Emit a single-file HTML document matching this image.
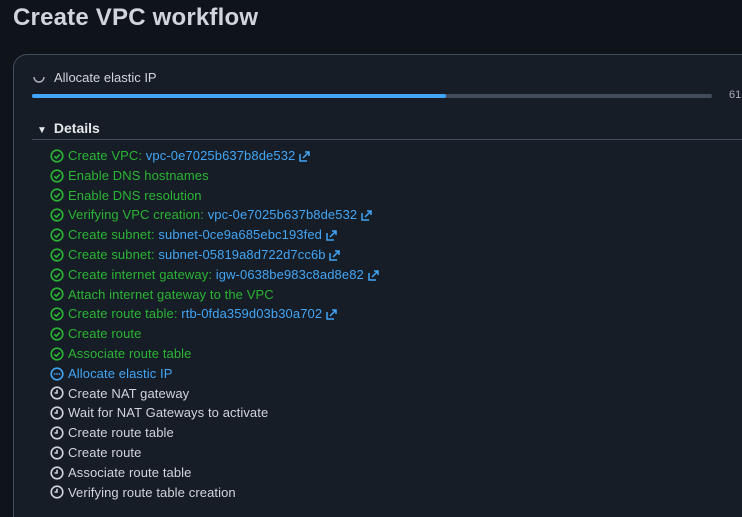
<!DOCTYPE html>
<html style="width:742px;height:517px;overflow:hidden"><head><style>
body{margin:0;width:742px;height:517px;background:#0f141a;font-family:"Liberation Sans",sans-serif;overflow:hidden;position:relative;color:#d1d5db}
h1{position:absolute;left:13px;top:4px;margin:0;font-size:24px;font-weight:bold;color:#d1d5db;letter-spacing:0.2px}
.card{position:absolute;left:13px;top:54px;width:728px;height:463px;background:#161d26;border:1px solid #414d5c;border-right:none;border-bottom:none;border-radius:14px 0 0 0}
.spin{position:absolute;left:33px;top:71px}
.cur{position:absolute;left:54px;top:70px;font-size:13px;color:#d1d5db}
.bar{position:absolute;left:32px;top:94px;width:680px;height:4px;background:#414d5c;border-radius:2px}
.bar div{width:414px;height:4px;background:#42a5f5;border-radius:2px}
.pct{position:absolute;left:729px;top:89px;font-size:11px;color:#aab}
.det{position:absolute;left:37px;top:120px;font-size:14px;font-weight:bold;color:#e5e7eb}
.det span{font-size:10px;margin-right:7px}
.hr{position:absolute;left:32px;top:139px;width:710px;height:1px;background:#414d5c}
.rows{position:absolute;left:50px;top:146px;font-size:13px;letter-spacing:0.1px}
.r{height:19.8px;line-height:19.8px;white-space:nowrap;display:flex;align-items:center}
.r svg{margin-right:4px;flex:none}
.g{color:#2bb534}.b{color:#42a5f5}.w{color:#d1d5db}
a{color:#42a5f5;text-decoration:none}
</style></head><body>
<h1>Create VPC workflow</h1>
<div class="card"></div>
<svg class="spin" width="12" height="12" viewBox="0 0 12 12"><path d="M6 11A5 5 0 0 1 1 6" fill="none" stroke="#aab" stroke-width="1.5"/><path d="M6 11A5 5 0 0 0 11 6" fill="none" stroke="#aab" stroke-width="1.5"/></svg>
<div class="cur">Allocate elastic IP</div>
<div class="bar"><div></div></div>
<div class="pct">61</div>
<div class="det"><span>▼</span>Details</div>
<div class="hr"></div>
<div class="rows">
<svg width="0" height="0" style="position:absolute"><defs>
<g id="ok"><circle cx="7" cy="7" r="5.8" fill="none" stroke="#2bb534" stroke-width="1.6"/><path d="M4.3 7.2l2 2 3.5-3.8" fill="none" stroke="#2bb534" stroke-width="1.6"/></g>
<g id="pr"><circle cx="7" cy="7" r="5.8" fill="none" stroke="#42a5f5" stroke-width="1.6"/><circle cx="4.6" cy="7" r=".9" fill="#42a5f5"/><circle cx="7" cy="7" r=".9" fill="#42a5f5"/><circle cx="9.4" cy="7" r=".9" fill="#42a5f5"/></g>
<g id="ck"><circle cx="7" cy="7" r="5.8" fill="none" stroke="#d1d5db" stroke-width="1.6"/><path d="M7 3.8V7H4.5" fill="none" stroke="#d1d5db" stroke-width="1.6"/></g>
<g id="ex"><path d="M1 4v7h7M6 2h4v4M10 2L4 8" fill="none" stroke="#42a5f5" stroke-width="1.5"/></g>
</defs></svg>
<div class="r g"><svg width="14" height="14"><use href="#ok"/></svg>Create VPC:&nbsp;<a>vpc-0e7025b637b8de532</a>&nbsp;<svg width="12" height="12"><use href="#ex"/></svg></div>
<div class="r g"><svg width="14" height="14"><use href="#ok"/></svg>Enable DNS hostnames</div>
<div class="r g"><svg width="14" height="14"><use href="#ok"/></svg>Enable DNS resolution</div>
<div class="r g"><svg width="14" height="14"><use href="#ok"/></svg>Verifying VPC creation:&nbsp;<a>vpc-0e7025b637b8de532</a>&nbsp;<svg width="12" height="12"><use href="#ex"/></svg></div>
<div class="r g"><svg width="14" height="14"><use href="#ok"/></svg>Create subnet:&nbsp;<a>subnet-0ce9a685ebc193fed</a>&nbsp;<svg width="12" height="12"><use href="#ex"/></svg></div>
<div class="r g"><svg width="14" height="14"><use href="#ok"/></svg>Create subnet:&nbsp;<a>subnet-05819a8d722d7cc6b</a>&nbsp;<svg width="12" height="12"><use href="#ex"/></svg></div>
<div class="r g"><svg width="14" height="14"><use href="#ok"/></svg>Create internet gateway:&nbsp;<a>igw-0638be983c8ad8e82</a>&nbsp;<svg width="12" height="12"><use href="#ex"/></svg></div>
<div class="r g"><svg width="14" height="14"><use href="#ok"/></svg>Attach internet gateway to the VPC</div>
<div class="r g"><svg width="14" height="14"><use href="#ok"/></svg>Create route table:&nbsp;<a>rtb-0fda359d03b30a702</a>&nbsp;<svg width="12" height="12"><use href="#ex"/></svg></div>
<div class="r g"><svg width="14" height="14"><use href="#ok"/></svg>Create route</div>
<div class="r g"><svg width="14" height="14"><use href="#ok"/></svg>Associate route table</div>
<div class="r b"><svg width="14" height="14"><use href="#pr"/></svg>Allocate elastic IP</div>
<div class="r w"><svg width="14" height="14"><use href="#ck"/></svg>Create NAT gateway</div>
<div class="r w"><svg width="14" height="14"><use href="#ck"/></svg>Wait for NAT Gateways to activate</div>
<div class="r w"><svg width="14" height="14"><use href="#ck"/></svg>Create route table</div>
<div class="r w"><svg width="14" height="14"><use href="#ck"/></svg>Create route</div>
<div class="r w"><svg width="14" height="14"><use href="#ck"/></svg>Associate route table</div>
<div class="r w"><svg width="14" height="14"><use href="#ck"/></svg>Verifying route table creation</div>
</div>
</body></html>
